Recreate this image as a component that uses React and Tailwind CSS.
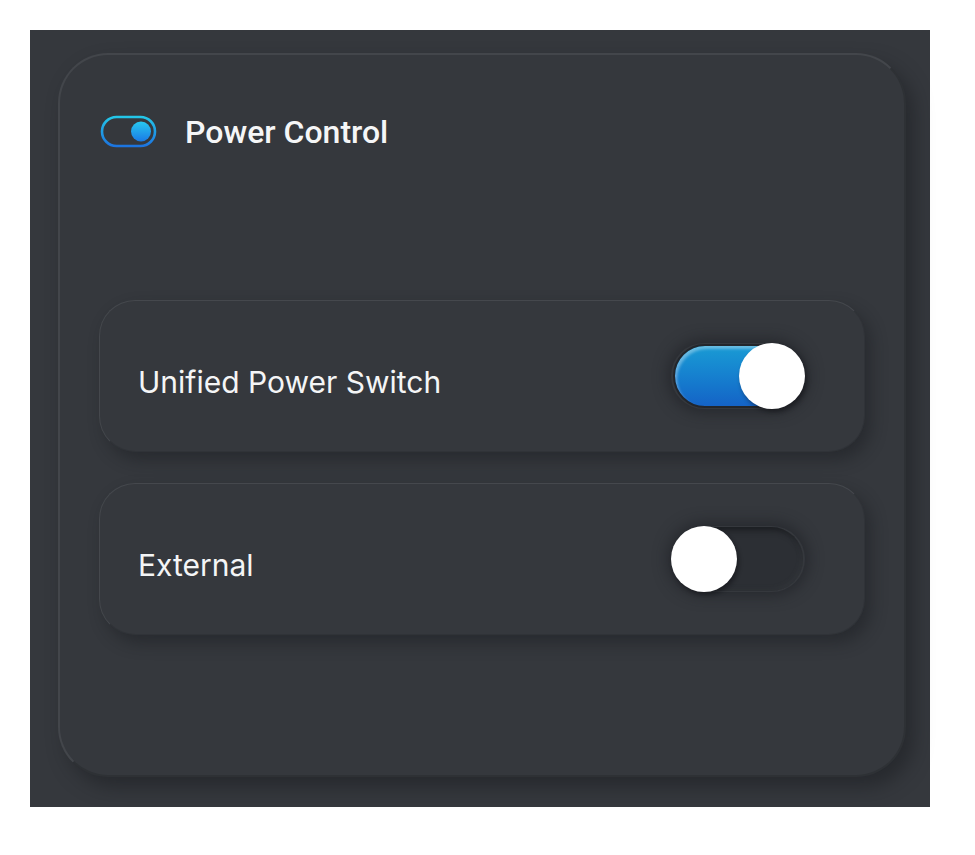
import React, { useState } from "react";

function HeaderIcon() {
  return (
    <svg width="58" height="34" viewBox="0 0 58 34" fill="none">
      <defs>
        <linearGradient id="ring" x1="0" y1="0" x2="0" y2="1">
          <stop offset="0" stopColor="#23c6e8" />
          <stop offset="1" stopColor="#1c74e0" />
        </linearGradient>
        <linearGradient id="dot" x1="0" y1="0" x2="0" y2="1">
          <stop offset="0" stopColor="#28c8ef" />
          <stop offset="1" stopColor="#1a7ae6" />
        </linearGradient>
      </defs>
      <rect x="2" y="2" width="53" height="29" rx="14.5" stroke="url(#ring)" strokeWidth="2.6" />
      <circle cx="41" cy="16.5" r="10" fill="url(#dot)" />
    </svg>
  );
}

function Toggle({ on, onChange }) {
  return (
    <button
      onClick={() => onChange(!on)}
      className="relative h-[66px] w-[134px] rounded-full shadow-[0_0_14px_4px_rgba(28,30,34,0.55)]"
    >
      <span
        className={
          on
            ? "absolute inset-y-[1px] left-[2px] right-[2px] rounded-full border-2 border-[#23262b] bg-gradient-to-b from-[#1a9bd4] via-[#1680cf] to-[#1563c6] shadow-[inset_2px_3px_3px_rgba(255,255,255,0.35)]"
            : "absolute inset-y-[1px] left-[2px] right-[2px] rounded-full bg-[#2c2f34] shadow-[inset_3px_3px_6px_rgba(18,20,23,0.7),inset_-2px_-2px_4px_rgba(70,74,80,0.25)]"
        }
      />
      <span
        className={
          "absolute top-0 h-[66px] w-[66px] rounded-full bg-white shadow-[2px_3px_4px_rgba(10,12,16,0.45)] " +
          (on ? "right-0" : "left-0")
        }
      />
    </button>
  );
}

function Row({ label, on, onChange }) {
  return (
    <div className="flex h-[152px] items-center justify-between rounded-[36px] border border-[#45484d] border-b-[#303338] border-r-[#303338] bg-[#35383d] pl-[38px] pr-[59px] shadow-[6px_8px_16px_rgba(24,26,30,0.45)]">
      <span className="pt-[11px] text-[30px] leading-none text-[#f4f5f6]" style={{ fontFamily: "Inter, sans-serif" }}>
        {label}
      </span>
      <Toggle on={on} onChange={onChange} />
    </div>
  );
}

export default function App() {
  const [unified, setUnified] = useState(true);
  const [external, setExternal] = useState(false);

  return (
    <div className="h-[855px] w-[975px] bg-white pl-[30px] pt-[30px]">
      <div className="h-[777px] w-[900px] bg-[#35383d] pl-[28px] pt-[23px]">
        <div className="h-[724px] w-[848px] rounded-[50px] border-2 border-[#43464b] border-b-[#2e3135] border-r-[#2e3135] bg-[#35383d] px-[39px] pt-[60px] shadow-[8px_10px_18px_rgba(26,28,32,0.5)]">
          <div className="flex items-center gap-[27px] pl-[1px]">
            <HeaderIcon />
            <h1
              className="text-[32px] font-medium leading-none text-[#f5f6f7]"
              style={{ fontFamily: "Roboto, sans-serif" }}
            >
              Power Control
            </h1>
          </div>
          <div className="mt-[151px] flex flex-col gap-[31px]">
            <Row label="Unified Power Switch" on={unified} onChange={setUnified} />
            <Row label="External" on={external} onChange={setExternal} />
          </div>
        </div>
      </div>
    </div>
  );
}
